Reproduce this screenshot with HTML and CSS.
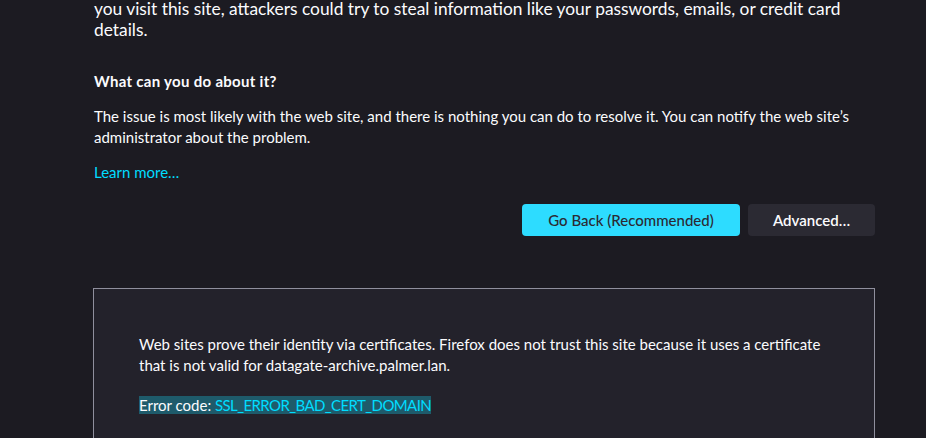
FILE: index.html
```html
<!DOCTYPE html>
<html lang="en">
<head>
<meta charset="utf-8">
<title>Warning: Potential Security Risk Ahead</title>
<link rel="stylesheet" href="styles.css">
</head>
<body>
<main class="container">
  <p class="intro">you visit this site, attackers could try to steal information like your passwords, emails, or credit card details.</p>
  <h2 class="heading">What can you do about it?</h2>
  <p class="text">The issue is most likely with the web site, and there is nothing you can do to resolve it. You can notify the web site’s administrator about the problem.</p>
  <p class="learn"><a class="link" href="#">Learn more…</a></p>
  <div class="actions">
    <button class="btn btn-primary">Go Back (Recommended)</button>
    <button class="btn btn-secondary">Advanced…</button>
  </div>
  <section class="advanced">
    <p class="text">Web sites prove their identity via certificates. Firefox does not trust this site because it uses a certificate that is not valid for datagate-archive.palmer.lan.</p>
    <p class="text code-line"><span class="selected">Error code: <a class="link code" href="#">SSL_ERROR_BAD_CERT_DOMAIN</a></span></p>
  </section>
</main>
</body>
</html>
```
FILE: styles.css
```css
html, body {
  margin: 0;
  padding: 0;
  background: #1c1b22;
  color: #fbfbfe;
  font-family: Lato, "Noto Sans", sans-serif;
  overflow: hidden;
  height: 438px;
}
.container {
  margin-left: 94px;
  width: 781px;
}
.intro {
  margin: -1px 0 0;
  font-size: 17.35px;
  line-height: 20.6px;
}
.heading {
  margin: 30.6px 0 0;
  font-size: 15px;
  line-height: 20.6px;
  font-weight: 700;
  letter-spacing: 0.3px;
}
.text {
  margin: 15px 0 0;
  font-size: 15px;
  line-height: 20.6px;
}
.learn {
  margin: 14px 0 0;
  font-size: 15px;
  line-height: 20.6px;
}
.link {
  color: #00ddff;
  text-decoration: none;
}
.code {
  letter-spacing: -0.6px;
}
.actions {
  display: flex;
  justify-content: flex-end;
  gap: 8px;
  margin-top: 22px;
}
.btn {
  height: 32px;
  border: none;
  border-radius: 4px;
  padding: 0 24px;
  font-family: inherit;
  font-size: 15px;
  font-weight: 600;
}
.btn-primary {
  background: #2ddcff;
  color: #2b2a33;
  width: 218px;
  font-weight: 500;
}
.btn-secondary {
  background: #2b2a33;
  color: #fbfbfe;
  width: 127px;
}
.advanced {
  margin-top: 52px;
  margin-left: -1px;
  border: 1px solid #8f8f9d;
  background: #23222b;
  padding: 45px 44px 60px 45px;
}
.advanced .text {
  margin: 0;
}
.advanced .code-line {
  margin-top: 19.4px;
}
.selected {
  background: #1e5b6b;
}
```
